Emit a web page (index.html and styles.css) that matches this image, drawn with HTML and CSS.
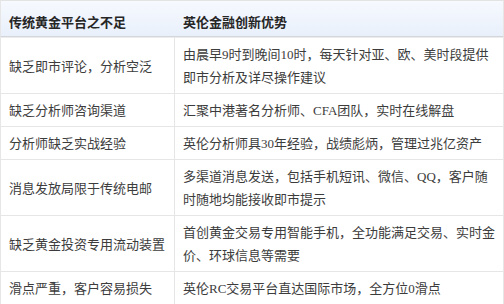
FILE: index.html
```html
<!DOCTYPE html>
<html lang="zh">
<head>
<meta charset="utf-8">
<link rel="stylesheet" href="styles.css">
</head>
<body>
<table class="cmp">
  <colgroup><col class="c1"><col class="c2"></colgroup>
  <thead>
    <tr><th class="first">传统黄金平台之不足</th><th class="second">英伦金融创新优势</th></tr>
  </thead>
  <tbody>
    <tr class="top"><td class="first">缺乏即市评论，分析空泛</td><td class="second">由晨早9时到晚间10时，每天针对亚、欧、美时段提供即市分析及详尽操作建议</td></tr>
    <tr><td class="first">缺乏分析师咨询渠道</td><td class="second">汇聚中港著名分析师、CFA团队，实时在线解盘</td></tr>
    <tr><td class="first">分析师缺乏实战经验</td><td class="second">英伦分析师具30年经验，战绩彪炳，管理过兆亿资产</td></tr>
    <tr><td class="first">消息发放局限于传统电邮</td><td class="second">多渠道消息发送，包括手机短讯、微信、QQ，客户随时随地均能接收即市提示</td></tr>
    <tr><td class="first">缺乏黄金投资专用流动装置</td><td class="second">首创黄金交易专用智能手机，全功能满足交易、实时金价、环球信息等需要</td></tr>
    <tr><td class="first">滑点严重，客户容易损失</td><td class="second">英伦RC交易平台直达国际市场，全方位0滑点</td></tr>
  </tbody>
</table>
</body>
</html>
```
FILE: styles.css
```css
html, body {
  margin: 0;
  padding: 0;
  background: #ffffff;
}
.cmp {
  width: 504px;
  border-collapse: separate;
  border-spacing: 0;
  table-layout: fixed;
  font-family: "Liberation Serif", "Noto Sans CJK TC", serif;
  font-size: 13px;
  color: #3c3c3c;
}
.c1 { width: 175px; }
.c2 { width: 329px; }
.cmp th, .cmp td {
  text-align: left;
  vertical-align: middle;
  box-sizing: border-box;
}
.cmp th {
  font-weight: bold;
  color: #262626;
  line-height: 23px;
  padding: 10px 8px 2px 8px;
  background: linear-gradient(#f6f9fe, #e9f0fb);
  border-top: 1px solid #e3e3e3;
  border-bottom: 1px solid #d4d6da;
}
.cmp th.first { border-left: 1px solid #e6e6e6; }
.cmp th.second { border-right: 1px solid #e6e6e6; }
.cmp td {
  line-height: 23px;
  padding: 5px 4px 4px 8px;
  border-bottom: 1px solid #e6e6e6;
}
.cmp tr.top td { border-top: 1px solid #ececec; }
.cmp td.first {
  border-left: 1px solid #e6e6e6;
  border-right: 1px solid #e6e6e6;
}
.cmp td.second { border-right: 1px solid #e6e6e6; }
```
